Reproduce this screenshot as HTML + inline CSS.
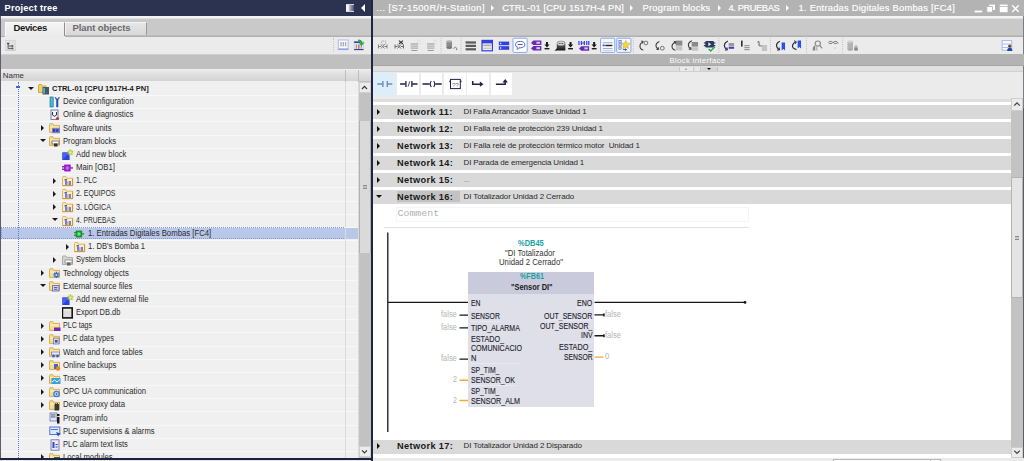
<!DOCTYPE html>
<html><head><meta charset="utf-8"><title>TIA Portal</title>
<style>
html,body{margin:0;padding:0}
body{width:1024px;height:461px;overflow:hidden;background:#fff;position:relative;font-family:"Liberation Sans",sans-serif;font-size:7.8px;color:#2a2a2a}
div{position:absolute;box-sizing:border-box}
svg{display:block}
.b{font-weight:bold}
/* left panel */
#lp{left:0;top:0;width:372px;height:461px;background:#f0f0f0;overflow:hidden}
#ltitle{left:0;top:0;width:371px;height:16.2px;background:#2b3351}
#ltitle .t{left:4.6px;top:2.9px;color:#fff;font-weight:bold;font-size:9.2px;letter-spacing:0.2px;line-height:11px;white-space:nowrap}
#ltabs{left:0;top:16.2px;width:371px;height:20px;background:linear-gradient(#f4f4f4 0,#f2f2f2 2px,#cdcdcd 3px,#c9c9c9 3.6px,#c9c9c9 100%)}
#ltool{left:0;top:36px;width:371px;height:18.4px;background:#ebebeb}
#lband{left:0;top:54.4px;width:371px;height:14.4px;background:#c0c0c0;border-top:1px solid #cfcfcf}
#lhead{left:0;top:68.8px;width:371px;height:12.6px;background:linear-gradient(#e9e9e9,#d3d3d3);border-top:1px solid #f0f0f0}
.tab1{left:5px;top:21.6px;width:59.5px;height:14.9px;background:linear-gradient(#f4f4f4,#ebebeb);border-left:1px solid #fafafa;border-top:1px solid #fafafa;border-right:1.6px solid #8c8c8c;}
.tab2{left:64.6px;top:22px;width:82px;height:13.9px;background:linear-gradient(#e6e6e6,#d8d8d8);border-left:1px solid #f4f4f4;border-top:1px solid #f4f4f4;border-right:1px solid #999;border-bottom:1px solid #a8a8a8}
.tabt{white-space:nowrap;font-weight:bold;font-size:9px;line-height:11px}
.tt{white-space:nowrap;line-height:13.2px;height:13.2px;color:#2c2c2c}
.tt.b{font-size:7.5px;color:#1c1c1c}
.ic{width:12px;height:12px}
.rs{left:1px;width:358px;height:1px;background:#f8f8f8}
.selbg{left:1px;width:357.5px;height:11.6px;background:#b9c7e8}
.sel{left:1px;width:344.6px;height:12px;border:1px dotted #7b94da}
.ar{width:0;height:0;border-left:3.6px solid #1a1a1a;border-top:3.1px solid transparent;border-bottom:3.1px solid transparent}
.ad{width:0;height:0;border-top:3.8px solid #1a1a1a;border-left:3.3px solid transparent;border-right:3.3px solid transparent}
/* right */
#div{left:370.7px;top:0;width:2px;height:461px;background:#1f2640}
#rtitle{left:372.7px;top:0;width:651.3px;height:16.2px;background:#b3b3b3}
#rtitle .t{left:3.5px;top:2.2px;color:#fff;font-size:9.6px;letter-spacing:0.32px;line-height:11px;white-space:nowrap;font-weight:bold;opacity:.96}
#rsub{left:372.7px;top:16.2px;width:651.3px;height:20.6px;background:linear-gradient(#f4f4f4 0,#f2f2f2 2px,#cdcdcd 3px,#c9c9c9 3.6px,#c9c9c9 18.6px,#bcbcbc 18.8px,#bcbcbc 19.8px,#b0b0b0 19.8px,#b0b0b0 100%)}
#rtool{left:372.7px;top:37px;width:651.3px;height:17.4px;background:#ebebeb}
#rband{z-index:2;left:372.7px;top:54.3px;width:651.3px;height:12.2px;background:#b3b3b3;border-bottom:0.8px solid #a6a6a6}
#rband .t{left:296px;top:1.2px;color:#fff;font-size:7.8px;line-height:10px;white-space:nowrap;letter-spacing:0.1px}
#rlad{left:372.7px;top:66.8px;width:651.3px;height:34.9px;background:#ebebeb;border-bottom:3.5px solid #dedede}
.lb{top:73px;width:21.8px;height:21.8px;background:#fff}
.nb{left:372.6px;width:638.6px;background:#d9d9d9}
.nt{left:397px;font-weight:bold;font-size:9.2px;letter-spacing:0.38px;line-height:13.4px;white-space:nowrap;color:#1a1a1a}
.nd{left:463.6px;font-size:7.8px;line-height:13.6px;white-space:nowrap;color:#2a2a2a}
.nar{left:376.9px;width:0;height:0;border-left:3.8px solid #111;border-top:3.4px solid transparent;border-bottom:3.4px solid transparent}
.nad{left:375.6px;width:0;height:0;border-top:3.6px solid #111;border-left:3.3px solid transparent;border-right:3.3px solid transparent}
.nhl{left:396.6px;width:63.8px;height:10.6px;background:#c2c2c2}
.pn0{white-space:nowrap;line-height:9px;font-size:7.6px;color:#1e1e2a;letter-spacing:-0.1px}
.pl{left:470.6px}
.pr{right:431.6px;text-align:right}
.val{white-space:nowrap;line-height:9px;font-size:7.8px;color:#b4b4b4}
.wl{height:1.1px;background:#1a1a1a}
.ol{height:1.2px;background:#f5a832}
</style></head><body>
<!-- LEFT PANEL -->
<div id="lp">
<div class="rs" style="top:95.08px"></div>
<div class="rs" style="top:108.26px"></div>
<div class="rs" style="top:121.44px"></div>
<div class="rs" style="top:134.62px"></div>
<div class="rs" style="top:147.80px"></div>
<div class="rs" style="top:160.98px"></div>
<div class="rs" style="top:174.16px"></div>
<div class="rs" style="top:187.34px"></div>
<div class="rs" style="top:200.52px"></div>
<div class="rs" style="top:213.70px"></div>
<div class="rs" style="top:226.88px"></div>
<div class="rs" style="top:240.06px"></div>
<div class="rs" style="top:253.24px"></div>
<div class="rs" style="top:266.42px"></div>
<div class="rs" style="top:279.60px"></div>
<div class="rs" style="top:292.78px"></div>
<div class="rs" style="top:305.96px"></div>
<div class="rs" style="top:319.14px"></div>
<div class="rs" style="top:332.32px"></div>
<div class="rs" style="top:345.50px"></div>
<div class="rs" style="top:358.68px"></div>
<div class="rs" style="top:371.86px"></div>
<div class="rs" style="top:385.04px"></div>
<div class="rs" style="top:398.22px"></div>
<div class="rs" style="top:411.40px"></div>
<div class="rs" style="top:424.58px"></div>
<div class="rs" style="top:437.76px"></div>
<div class="rs" style="top:450.94px"></div>
<div class="rs" style="top:464.12px"></div>
<div class="ad" style="left:27.6px;top:86.50px"></div>
<div class="ic" style="left:38px;top:82.70px"><svg width="12" height="12" viewBox="0 0 12 12"><path d="M0.5 2 L0.5 9.5 L8 9.5 L8 3 L4.5 3 L3.5 1.5 L1 1.5 Z" fill="#f3cf6a" stroke="#c79a2b" stroke-width="0.8"/><rect x="4.5" y="4" width="6.5" height="7.5" fill="#4a5568"/><rect x="5.3" y="5" width="1.6" height="5.5" fill="#3ec6e0"/></svg></div>
<div style="left:51.699999999999996px;top:82.0px;font-size:8.0px;font-weight:bold;color:#1c1c1c;line-height:13.2px;white-space:nowrap;transform-origin:0 0;transform:scaleX(0.9336);">CTRL-01 [CPU 1517H-4 PN]</div>
<div class="ic" style="left:49px;top:95.88px"><svg width="12" height="12" viewBox="0 0 12 12"><rect x="1" y="1" width="3.2" height="10" fill="#2fc4e6" stroke="#44506a" stroke-width="0.6"/><path d="M6 1.5 L7.5 4 L7.5 11 L9 11 L9 4 L10.5 1.5 L9.6 1.5 L8.8 3 L7.7 3 L6.9 1.5 Z" fill="#1f4fa8" stroke="#1f4fa8" stroke-width="0.5"/></svg></div>
<div style="left:63.4px;top:95.18px;font-size:8.3px;color:#2c2c2c;line-height:13.2px;white-space:nowrap;transform-origin:0 0;transform:scaleX(0.9414);">Device configuration</div>
<div class="ic" style="left:49px;top:109.06px"><svg width="12" height="12" viewBox="0 0 12 12"><rect x="2" y="1" width="7" height="9.5" fill="#f4f4fa" stroke="#5560a0" stroke-width="0.8"/><path d="M3.5 3 L3.5 6 Q5.5 8.5 7.5 6 L7.5 3" fill="none" stroke="#334" stroke-width="1"/><circle cx="8.5" cy="9.5" r="1.6" fill="#c33"/></svg></div>
<div style="left:63.4px;top:108.36px;font-size:8.3px;color:#2c2c2c;line-height:13.2px;white-space:nowrap;transform-origin:0 0;transform:scaleX(0.9304);">Online &amp; diagnostics</div>
<div class="ar" style="left:40.6px;top:124.94px"></div>
<div class="ic" style="left:49px;top:122.24px"><svg width="12" height="12" viewBox="0 0 12 12"><path d="M0.5 2.6 L0.5 10.4 L10.5 10.4 L10.5 3.4 L4.6 3.4 L3.8 1.7 L1 1.7 Z" fill="#f7dc8c" stroke="#d0a040" stroke-width="0.8"/><rect x="1" y="4.4" width="9" height="1.4" fill="#fbeebc"/><rect x="3" y="5.8" width="8" height="5.4" fill="#7a84c8"/><rect x="4" y="7.2" width="2.2" height="2.6" fill="#2a38a8"/><rect x="7.2" y="7.2" width="2.2" height="2.6" fill="#2a38a8"/></svg></div>
<div style="left:63.4px;top:121.54px;font-size:8.3px;color:#2c2c2c;line-height:13.2px;white-space:nowrap;transform-origin:0 0;transform:scaleX(0.9222);">Software units</div>
<div class="ad" style="left:39.6px;top:139.22px"></div>
<div class="ic" style="left:49px;top:135.42px"><svg width="12" height="12" viewBox="0 0 12 12"><path d="M0.5 2.6 L0.5 10.4 L10.5 10.4 L10.5 3.4 L4.6 3.4 L3.8 1.7 L1 1.7 Z" fill="#f7dc8c" stroke="#d0a040" stroke-width="0.8"/><rect x="1" y="4.4" width="9" height="1.4" fill="#fbeebc"/><rect x="3" y="6" width="7" height="3" fill="#fff" stroke="#555" stroke-width="0.7"/><rect x="5" y="8.5" width="3.5" height="3" fill="#333"/></svg></div>
<div style="left:63.4px;top:134.72px;font-size:8.3px;color:#2c2c2c;line-height:13.2px;white-space:nowrap;transform-origin:0 0;transform:scaleX(0.9226);">Program blocks</div>
<div class="ic" style="left:61.5px;top:148.60px"><svg width="12" height="12" viewBox="0 0 12 12"><path d="M0.3 3.4 L7.6 3.4 L7.6 11 L0.3 11 Z" fill="#2b44e0"/><path d="M0.3 3.4 L7.6 3.4 L0.3 11Z" fill="#4a62f0"/><circle cx="8.4" cy="3.4" r="2.9" fill="#b8e060" opacity="0.55"/><path d="M8.4 0.4 L9.1 2.5 L11.3 2.6 L9.6 3.9 L10.2 6 L8.4 4.8 L6.6 6 L7.2 3.9 L5.5 2.6 L7.7 2.5 Z" fill="#f8f060" stroke="#88a830" stroke-width="0.4"/></svg></div>
<div style="left:75.9px;top:147.9px;font-size:8.3px;color:#2c2c2c;line-height:13.2px;white-space:nowrap;transform-origin:0 0;transform:scaleX(0.9355);">Add new block</div>
<div class="ic" style="left:61.5px;top:161.78px"><svg width="12" height="12" viewBox="0 0 12 12"><rect x="2" y="2.6" width="6.8" height="6.8" rx="0.8" fill="#9a22cc"/><rect x="0" y="4.1" width="2.2" height="1.3" fill="#7a18a8"/><rect x="0" y="6.6" width="2.2" height="1.3" fill="#7a18a8"/><rect x="8.6" y="5.3" width="2.4" height="1.3" fill="#7a18a8"/><circle cx="5.4" cy="6" r="1.7" fill="#d060f8"/></svg></div>
<div style="left:75.9px;top:161.08px;font-size:8.3px;color:#2c2c2c;line-height:13.2px;white-space:nowrap;transform-origin:0 0;transform:scaleX(0.9394);">Main [OB1]</div>
<div class="ar" style="left:53.1px;top:177.66px"></div>
<div class="ic" style="left:61.5px;top:174.96px"><svg width="12" height="12" viewBox="0 0 12 12"><path d="M0.5 2.4 L0.5 10.6 L10.6 10.6 L10.6 3.2 L4.4 3.2 L3.6 1.5 L1 1.5 Z" fill="#fbeeb8" stroke="#d6a648" stroke-width="0.8"/><path d="M0.5 10.6 H10.6 V3.4" fill="none" stroke="#c48c30" stroke-width="0.8"/><g fill="#2b35e0"><rect x="2.6" y="4.2" width="2.4" height="1.3"/><rect x="3" y="5.4" width="0.7" height="4" opacity="0.55"/><rect x="3.4" y="6.4" width="2" height="1.2"/><rect x="3.4" y="8.4" width="2" height="1.2"/><rect x="6.8" y="6.4" width="2.2" height="1.2"/><rect x="6.8" y="8.4" width="2.2" height="1.2"/><rect x="5.4" y="6.8" width="1.4" height="0.5" opacity="0.5"/><rect x="5.4" y="8.8" width="1.4" height="0.5" opacity="0.5"/></g></svg></div>
<div style="left:75.9px;top:174.26px;font-size:8.3px;color:#2c2c2c;line-height:13.2px;white-space:nowrap;transform-origin:0 0;transform:scaleX(0.8276);">1. PLC</div>
<div class="ar" style="left:53.1px;top:190.84px"></div>
<div class="ic" style="left:61.5px;top:188.14px"><svg width="12" height="12" viewBox="0 0 12 12"><path d="M0.5 2.4 L0.5 10.6 L10.6 10.6 L10.6 3.2 L4.4 3.2 L3.6 1.5 L1 1.5 Z" fill="#fbeeb8" stroke="#d6a648" stroke-width="0.8"/><path d="M0.5 10.6 H10.6 V3.4" fill="none" stroke="#c48c30" stroke-width="0.8"/><g fill="#2b35e0"><rect x="2.6" y="4.2" width="2.4" height="1.3"/><rect x="3" y="5.4" width="0.7" height="4" opacity="0.55"/><rect x="3.4" y="6.4" width="2" height="1.2"/><rect x="3.4" y="8.4" width="2" height="1.2"/><rect x="6.8" y="6.4" width="2.2" height="1.2"/><rect x="6.8" y="8.4" width="2.2" height="1.2"/><rect x="5.4" y="6.8" width="1.4" height="0.5" opacity="0.5"/><rect x="5.4" y="8.8" width="1.4" height="0.5" opacity="0.5"/></g></svg></div>
<div style="left:75.9px;top:187.44px;font-size:8.3px;color:#2c2c2c;line-height:13.2px;white-space:nowrap;transform-origin:0 0;transform:scaleX(0.8396);">2. EQUIPOS</div>
<div class="ar" style="left:53.1px;top:204.02px"></div>
<div class="ic" style="left:61.5px;top:201.32px"><svg width="12" height="12" viewBox="0 0 12 12"><path d="M0.5 2.4 L0.5 10.6 L10.6 10.6 L10.6 3.2 L4.4 3.2 L3.6 1.5 L1 1.5 Z" fill="#fbeeb8" stroke="#d6a648" stroke-width="0.8"/><path d="M0.5 10.6 H10.6 V3.4" fill="none" stroke="#c48c30" stroke-width="0.8"/><g fill="#2b35e0"><rect x="2.6" y="4.2" width="2.4" height="1.3"/><rect x="3" y="5.4" width="0.7" height="4" opacity="0.55"/><rect x="3.4" y="6.4" width="2" height="1.2"/><rect x="3.4" y="8.4" width="2" height="1.2"/><rect x="6.8" y="6.4" width="2.2" height="1.2"/><rect x="6.8" y="8.4" width="2.2" height="1.2"/><rect x="5.4" y="6.8" width="1.4" height="0.5" opacity="0.5"/><rect x="5.4" y="8.8" width="1.4" height="0.5" opacity="0.5"/></g></svg></div>
<div style="left:75.9px;top:200.62px;font-size:8.3px;color:#2c2c2c;line-height:13.2px;white-space:nowrap;transform-origin:0 0;transform:scaleX(0.8622);">3. LÓGICA</div>
<div class="ad" style="left:52.1px;top:218.30px"></div>
<div class="ic" style="left:61.5px;top:214.50px"><svg width="12" height="12" viewBox="0 0 12 12"><path d="M0.5 2.4 L0.5 10.6 L10.6 10.6 L10.6 3.2 L4.4 3.2 L3.6 1.5 L1 1.5 Z" fill="#fbeeb8" stroke="#d6a648" stroke-width="0.8"/><path d="M0.5 10.6 H10.6 V3.4" fill="none" stroke="#c48c30" stroke-width="0.8"/><g fill="#2b35e0"><rect x="2.6" y="4.2" width="2.4" height="1.3"/><rect x="3" y="5.4" width="0.7" height="4" opacity="0.55"/><rect x="3.4" y="6.4" width="2" height="1.2"/><rect x="3.4" y="8.4" width="2" height="1.2"/><rect x="6.8" y="6.4" width="2.2" height="1.2"/><rect x="6.8" y="8.4" width="2.2" height="1.2"/><rect x="5.4" y="6.8" width="1.4" height="0.5" opacity="0.5"/><rect x="5.4" y="8.8" width="1.4" height="0.5" opacity="0.5"/></g></svg></div>
<div style="left:75.9px;top:213.8px;font-size:8.3px;color:#2c2c2c;line-height:13.2px;white-space:nowrap;transform-origin:0 0;transform:scaleX(0.8078);">4. PRUEBAS</div>
<div class="selbg" style="top:227.68px"></div><div class="sel" style="top:227.48px"></div>
<div class="ic" style="left:74px;top:227.68px"><svg width="12" height="12" viewBox="0 0 12 12"><rect x="1.6" y="2.4" width="6.6" height="7.2" rx="0.8" fill="#1f8f38"/><rect x="-0.2" y="4" width="2" height="1.3" fill="#1f8f38"/><rect x="-0.2" y="6.6" width="2" height="1.3" fill="#1f8f38"/><rect x="8" y="5.3" width="2.1" height="1.3" fill="#1f8f38"/><circle cx="4.9" cy="6" r="1.9" fill="#3fdc4c"/><circle cx="4.9" cy="6" r="0.9" fill="#7cf880"/></svg></div>
<div style="left:88.4px;top:226.98px;font-size:8.3px;color:#2c2c2c;line-height:13.2px;white-space:nowrap;transform-origin:0 0;transform:scaleX(0.9345);">1. Entradas Digitales Bombas [FC4]</div>
<div class="ar" style="left:65.6px;top:243.56px"></div>
<div class="ic" style="left:74px;top:240.86px"><svg width="12" height="12" viewBox="0 0 12 12"><path d="M0.5 2.4 L0.5 10.6 L10.6 10.6 L10.6 3.2 L4.4 3.2 L3.6 1.5 L1 1.5 Z" fill="#fbeeb8" stroke="#d6a648" stroke-width="0.8"/><path d="M0.5 10.6 H10.6 V3.4" fill="none" stroke="#c48c30" stroke-width="0.8"/><g fill="#2b35e0"><rect x="2.6" y="4.2" width="2.4" height="1.3"/><rect x="3" y="5.4" width="0.7" height="4" opacity="0.55"/><rect x="3.4" y="6.4" width="2" height="1.2"/><rect x="3.4" y="8.4" width="2" height="1.2"/><rect x="6.8" y="6.4" width="2.2" height="1.2"/><rect x="6.8" y="8.4" width="2.2" height="1.2"/><rect x="5.4" y="6.8" width="1.4" height="0.5" opacity="0.5"/><rect x="5.4" y="8.8" width="1.4" height="0.5" opacity="0.5"/></g></svg></div>
<div style="left:88.4px;top:240.16px;font-size:8.3px;color:#2c2c2c;line-height:13.2px;white-space:nowrap;transform-origin:0 0;transform:scaleX(0.9191);">1. DB's Bomba 1</div>
<div class="ar" style="left:53.1px;top:256.74px"></div>
<div class="ic" style="left:61.5px;top:254.04px"><svg width="12" height="12" viewBox="0 0 12 12"><path d="M0.5 3 L0.5 10.5 L10.5 10.5 L10.5 3.5 L5 3.5 L4 2 L1 2 Z" fill="#d6d6d6" stroke="#a0a0a0" stroke-width="0.8"/><rect x="3" y="6" width="7" height="3" fill="#fff" stroke="#777" stroke-width="0.7"/><rect x="5" y="8.5" width="3.5" height="3" fill="#666"/></svg></div>
<div style="left:75.9px;top:253.34px;font-size:8.3px;color:#2c2c2c;line-height:13.2px;white-space:nowrap;transform-origin:0 0;transform:scaleX(0.9214);">System blocks</div>
<div class="ar" style="left:40.6px;top:269.92px"></div>
<div class="ic" style="left:49px;top:267.22px"><svg width="12" height="12" viewBox="0 0 12 12"><path d="M0.5 2.6 L0.5 10.4 L10.5 10.4 L10.5 3.4 L4.6 3.4 L3.8 1.7 L1 1.7 Z" fill="#f7dc8c" stroke="#d0a040" stroke-width="0.8"/><rect x="1" y="4.4" width="9" height="1.4" fill="#fbeebc"/><g stroke="#2a6ae0" stroke-width="1.3"><path d="M7.4 4.8 V11 M4.3 7.9 H10.5 M5.2 5.7 L9.6 10.1 M9.6 5.7 L5.2 10.1"/></g><circle cx="7.4" cy="7.9" r="1" fill="#bfe0ff"/></svg></div>
<div style="left:63.4px;top:266.52px;font-size:8.3px;color:#2c2c2c;line-height:13.2px;white-space:nowrap;transform-origin:0 0;transform:scaleX(0.9321);">Technology objects</div>
<div class="ad" style="left:39.6px;top:284.20px"></div>
<div class="ic" style="left:49px;top:280.40px"><svg width="12" height="12" viewBox="0 0 12 12"><path d="M0.5 2.6 L0.5 10.4 L10.5 10.4 L10.5 3.4 L4.6 3.4 L3.8 1.7 L1 1.7 Z" fill="#f7dc8c" stroke="#d0a040" stroke-width="0.8"/><rect x="1" y="4.4" width="9" height="1.4" fill="#fbeebc"/><rect x="3.4" y="5.6" width="6.6" height="5.4" fill="#d0d4ee" stroke="#5a64a4" stroke-width="0.8"/><rect x="5" y="7.2" width="3.4" height="0.8" fill="#3a4490"/><rect x="5" y="8.8" width="3.4" height="0.8" fill="#3a4490"/></svg></div>
<div style="left:63.4px;top:279.7px;font-size:8.3px;color:#2c2c2c;line-height:13.2px;white-space:nowrap;transform-origin:0 0;transform:scaleX(0.9286);">External source files</div>
<div class="ic" style="left:61.5px;top:293.58px"><svg width="12" height="12" viewBox="0 0 12 12"><path d="M0.3 3.4 L7.6 3.4 L7.6 11 L0.3 11 Z" fill="#2b44e0"/><path d="M0.3 3.4 L7.6 3.4 L0.3 11Z" fill="#4a62f0"/><circle cx="8.4" cy="3.4" r="2.9" fill="#b8e060" opacity="0.55"/><path d="M8.4 0.4 L9.1 2.5 L11.3 2.6 L9.6 3.9 L10.2 6 L8.4 4.8 L6.6 6 L7.2 3.9 L5.5 2.6 L7.7 2.5 Z" fill="#f8f060" stroke="#88a830" stroke-width="0.4"/></svg></div>
<div style="left:75.9px;top:292.88px;font-size:8.3px;color:#2c2c2c;line-height:13.2px;white-space:nowrap;transform-origin:0 0;transform:scaleX(0.9409);">Add new external file</div>
<div class="ic" style="left:61.5px;top:306.76px"><svg width="12" height="12" viewBox="0 0 12 12"><rect x="0.4" y="0.9" width="9.8" height="10" fill="#dedede" stroke="#141414" stroke-width="1.6"/><rect x="2" y="2.4" width="6.4" height="1" fill="#f4f4f4"/></svg></div>
<div style="left:75.9px;top:306.06px;font-size:8.3px;color:#2c2c2c;line-height:13.2px;white-space:nowrap;transform-origin:0 0;transform:scaleX(0.8974);">Export DB.db</div>
<div class="ar" style="left:40.6px;top:322.64px"></div>
<div class="ic" style="left:49px;top:319.94px"><svg width="12" height="12" viewBox="0 0 12 12"><path d="M0.5 2.6 L0.5 10.4 L10.5 10.4 L10.5 3.4 L4.6 3.4 L3.8 1.7 L1 1.7 Z" fill="#f7dc8c" stroke="#d0a040" stroke-width="0.8"/><rect x="1" y="4.4" width="9" height="1.4" fill="#fbeebc"/><rect x="5" y="7.5" width="6.5" height="3.5" fill="#6a2ac0"/></svg></div>
<div style="left:63.4px;top:319.24px;font-size:8.3px;color:#2c2c2c;line-height:13.2px;white-space:nowrap;transform-origin:0 0;transform:scaleX(0.8524);">PLC tags</div>
<div class="ar" style="left:40.6px;top:335.82px"></div>
<div class="ic" style="left:49px;top:333.12px"><svg width="12" height="12" viewBox="0 0 12 12"><path d="M0.5 2.6 L0.5 10.4 L10.5 10.4 L10.5 3.4 L4.6 3.4 L3.8 1.7 L1 1.7 Z" fill="#f7dc8c" stroke="#d0a040" stroke-width="0.8"/><rect x="1" y="4.4" width="9" height="1.4" fill="#fbeebc"/><rect x="4.5" y="5" width="5.5" height="6" fill="#cfd4ee" stroke="#55609a" stroke-width="0.6"/><rect x="6" y="7" width="2.5" height="2.5" fill="#3a4aa8"/></svg></div>
<div style="left:63.4px;top:332.42px;font-size:8.3px;color:#2c2c2c;line-height:13.2px;white-space:nowrap;transform-origin:0 0;transform:scaleX(0.8969);">PLC data types</div>
<div class="ar" style="left:40.6px;top:349.00px"></div>
<div class="ic" style="left:49px;top:346.30px"><svg width="12" height="12" viewBox="0 0 12 12"><path d="M0.5 2.6 L0.5 10.4 L10.5 10.4 L10.5 3.4 L4.6 3.4 L3.8 1.7 L1 1.7 Z" fill="#f7dc8c" stroke="#d0a040" stroke-width="0.8"/><rect x="1" y="4.4" width="9" height="1.4" fill="#fbeebc"/><rect x="2.5" y="6" width="8" height="3" fill="#e8ecff" stroke="#5560a0" stroke-width="0.6"/><circle cx="4.5" cy="10" r="1.5" fill="#4466cc"/><circle cx="8.5" cy="10" r="1.5" fill="#4466cc"/></svg></div>
<div style="left:63.4px;top:345.6px;font-size:8.3px;color:#2c2c2c;line-height:13.2px;white-space:nowrap;transform-origin:0 0;transform:scaleX(0.9435);">Watch and force tables</div>
<div class="ar" style="left:40.6px;top:362.18px"></div>
<div class="ic" style="left:49px;top:359.48px"><svg width="12" height="12" viewBox="0 0 12 12"><path d="M0.5 2.6 L0.5 10.4 L10.5 10.4 L10.5 3.4 L4.6 3.4 L3.8 1.7 L1 1.7 Z" fill="#f7dc8c" stroke="#d0a040" stroke-width="0.8"/><rect x="1" y="4.4" width="9" height="1.4" fill="#fbeebc"/><rect x="5" y="5" width="4" height="5" fill="#3a66d8"/><circle cx="9" cy="9.5" r="2.2" fill="#f08020"/></svg></div>
<div style="left:63.4px;top:358.78px;font-size:8.3px;color:#2c2c2c;line-height:13.2px;white-space:nowrap;transform-origin:0 0;transform:scaleX(0.9333);">Online backups</div>
<div class="ar" style="left:40.6px;top:375.36px"></div>
<div class="ic" style="left:49px;top:372.66px"><svg width="12" height="12" viewBox="0 0 12 12"><path d="M0.5 2.6 L0.5 10.4 L10.5 10.4 L10.5 3.4 L4.6 3.4 L3.8 1.7 L1 1.7 Z" fill="#f7dc8c" stroke="#d0a040" stroke-width="0.8"/><rect x="1" y="4.4" width="9" height="1.4" fill="#fbeebc"/><rect x="2.5" y="5" width="9" height="6" fill="#3aa0d8"/><path d="M3 9 L5.5 7 L8 9 L11 6.5" stroke="#fff" stroke-width="0.9" fill="none"/></svg></div>
<div style="left:63.4px;top:371.96px;font-size:8.3px;color:#2c2c2c;line-height:13.2px;white-space:nowrap;transform-origin:0 0;transform:scaleX(0.9019);">Traces</div>
<div class="ar" style="left:40.6px;top:388.54px"></div>
<div class="ic" style="left:49px;top:385.84px"><svg width="12" height="12" viewBox="0 0 12 12"><path d="M0.5 2.6 L0.5 10.4 L10.5 10.4 L10.5 3.4 L4.6 3.4 L3.8 1.7 L1 1.7 Z" fill="#f7dc8c" stroke="#d0a040" stroke-width="0.8"/><rect x="1" y="4.4" width="9" height="1.4" fill="#fbeebc"/><circle cx="7.5" cy="8" r="3.3" fill="#3a78e0"/><circle cx="7.5" cy="8" r="1.6" fill="none" stroke="#fff" stroke-width="0.8"/></svg></div>
<div style="left:63.4px;top:385.14px;font-size:8.3px;color:#2c2c2c;line-height:13.2px;white-space:nowrap;transform-origin:0 0;transform:scaleX(0.9275);">OPC UA communication</div>
<div class="ar" style="left:40.6px;top:401.72px"></div>
<div class="ic" style="left:49px;top:399.02px"><svg width="12" height="12" viewBox="0 0 12 12"><path d="M0.5 2.6 L0.5 10.4 L10.5 10.4 L10.5 3.4 L4.6 3.4 L3.8 1.7 L1 1.7 Z" fill="#f7dc8c" stroke="#d0a040" stroke-width="0.8"/><rect x="1" y="4.4" width="9" height="1.4" fill="#fbeebc"/><rect x="5.5" y="5" width="4.5" height="6.5" fill="#3a3a3a"/><rect x="6.3" y="4" width="1" height="2" fill="#3a3a3a"/><rect x="8" y="4" width="1" height="2" fill="#3a3a3a"/></svg></div>
<div style="left:63.4px;top:398.32px;font-size:8.3px;color:#2c2c2c;line-height:13.2px;white-space:nowrap;transform-origin:0 0;transform:scaleX(0.9333);">Device proxy data</div>
<div class="ic" style="left:49px;top:412.20px"><svg width="12" height="12" viewBox="0 0 12 12"><rect x="1" y="1" width="7" height="8" fill="#dfe6fa" stroke="#5a68a8" stroke-width="0.7"/><rect x="2" y="2.5" width="4.5" height="0.9" fill="#445"/><rect x="2" y="4.5" width="4.5" height="0.9" fill="#445"/><rect x="8" y="5" width="2.5" height="6.5" fill="#1a1a1a"/><rect x="8" y="2" width="2.5" height="2" fill="#1a1a1a"/></svg></div>
<div style="left:63.4px;top:411.5px;font-size:8.3px;color:#2c2c2c;line-height:13.2px;white-space:nowrap;transform-origin:0 0;transform:scaleX(0.9365);">Program info</div>
<div class="ic" style="left:49px;top:425.38px"><svg width="12" height="12" viewBox="0 0 12 12"><rect x="0.8" y="2" width="10" height="7.5" fill="#dfe8ff" stroke="#4a78d8" stroke-width="1"/><rect x="2" y="4" width="7" height="1" fill="#4a78d8"/><path d="M7 7 L11.5 8.5 L9 11.5 Z" fill="#2a4ac8"/></svg></div>
<div style="left:63.4px;top:424.68px;font-size:8.3px;color:#2c2c2c;line-height:13.2px;white-space:nowrap;transform-origin:0 0;transform:scaleX(0.9193);">PLC supervisions &amp; alarms</div>
<div class="ic" style="left:49px;top:438.56px"><svg width="12" height="12" viewBox="0 0 12 12"><rect x="2" y="0.8" width="8" height="10.4" fill="#e8ecfa" stroke="#5a68a8" stroke-width="0.8"/><rect x="3.5" y="3" width="2" height="6" fill="#3a4ab0"/><rect x="6.5" y="5" width="2.2" height="1" fill="#3a4ab0"/><rect x="6.5" y="7.5" width="2.2" height="1" fill="#3a4ab0"/></svg></div>
<div style="left:63.4px;top:437.86px;font-size:8.3px;color:#2c2c2c;line-height:13.2px;white-space:nowrap;transform-origin:0 0;transform:scaleX(0.9064);">PLC alarm text lists</div>
<div class="ar" style="left:40.6px;top:454.44px"></div>
<div class="ic" style="left:49px;top:451.74px"><svg width="12" height="12" viewBox="0 0 12 12"><path d="M0.5 2.6 L0.5 10.4 L10.5 10.4 L10.5 3.4 L4.6 3.4 L3.8 1.7 L1 1.7 Z" fill="#f7dc8c" stroke="#d0a040" stroke-width="0.8"/><rect x="1" y="4.4" width="9" height="1.4" fill="#fbeebc"/><rect x="5" y="5" width="6" height="6.5" fill="#4a5568"/></svg></div>
<div style="left:63.4px;top:451.04px;font-size:8.3px;color:#2c2c2c;line-height:13.2px;white-space:nowrap;transform-origin:0 0;transform:scaleX(0.9249);">Local modules</div>
  <div style="left:344.5px;top:81px;width:1px;height:377px;background:#dcdcdc"></div>
  <div style="left:358px;top:81px;width:1px;height:377px;background:#dcdcdc"></div>
  <!-- scrollbar -->
  <div style="left:359px;top:81.4px;width:12px;height:377px;background:#c2c2c2"></div>
  <div style="left:359px;top:121px;width:11.8px;height:132px;background:#dadada;border-left:1px solid #b0b0b0;border-right:1px solid #b0b0b0"></div>
  <div style="left:362.8px;top:185px;width:4.4px;height:4px;background:repeating-linear-gradient(#8e8e8e 0,#8e8e8e 0.9px,#bcbcbc 0.9px,#bcbcbc 1.55px)"></div>
  <div style="left:359.4px;top:82px;width:11.3px;height:11.2px;background:#ececec;border:1px solid #d0d0d0"><svg width="9" height="9" viewBox="0 0 9 9" style="position:absolute;left:0;top:0"><path d="M2 6 L4.5 3.4 L7 6" fill="none" stroke="#333" stroke-width="1.1"/></svg></div>
  <div style="left:359.4px;top:446.2px;width:11.3px;height:11.2px;background:#ececec;border:1px solid #d0d0d0"><svg width="9" height="9" viewBox="0 0 9 9" style="position:absolute;left:0;top:0"><path d="M2 3.4 L4.5 6 L7 3.4" fill="none" stroke="#333" stroke-width="1.1"/></svg></div>
  <!-- dotted tree line -->
  <div style="left:17.7px;top:82px;width:0;height:376px;border-left:1px dotted #5b7bd8"></div>
  <div style="left:16.4px;top:85.9px;width:3.6px;height:2.6px;background:#3b63d6"></div>
  <div id="ltitle"><div class="t">Project tree</div>
    <div style="left:345.9px;top:3.9px;width:8px;height:7.9px;background:linear-gradient(90deg,#f2f2f2 0,#f2f2f2 26%,#b4b8c6 34%,#4a5270 100%);border-top:0.8px solid #d4d6de;border-bottom:0.8px solid #d4d6de;border-left:0.8px solid #f4f4f4"></div>
    <div style="left:361px;top:4px;width:0;height:0;border-right:4.4px solid #fff;border-top:4px solid transparent;border-bottom:4px solid transparent"></div>
  </div>
  <div id="ltabs"></div>
  <div class="tab1"></div><div style="left:13.6px;top:22.1px;font-size:9.5px;font-weight:bold;letter-spacing:-0.386px;color:#1a1a1a;line-height:11px;white-space:nowrap;">Devices</div>
  <div class="tab2"></div><div style="left:72.5px;top:22.1px;font-size:9.5px;font-weight:bold;letter-spacing:-0.086px;color:#6a6a6a;line-height:11px;white-space:nowrap;">Plant objects</div>
    <div id="ltool">
    <div style="left:332.8px;top:2px;width:0;height:14px;border-left:1px dotted #c8c8c8"></div>
  </div>
<svg style="position:absolute;left:0;top:36px" width="371" height="18.4" viewBox="0 36 371 18.4"><g><rect x="5.6" y="40.6" width="9.8" height="9.6" fill="#e2e2e2" stroke="#cfcfcf" stroke-width="0.6"/><rect x="5.6" y="49.6" width="9.8" height="1" fill="#c4c4c4"/><path d="M8 43.6 V48.6 M8 46 H12.6 M8 48.4 H12.6" stroke="#555" stroke-width="0.9" fill="none"/><rect x="7" y="42.8" width="2.2" height="1.4" fill="#444"/><rect x="11.4" y="45.2" width="1.8" height="1.6" fill="#555"/><rect x="11.4" y="47.6" width="1.8" height="1.6" fill="#555"/><path d="M12 42.4 L14.6 40 M13 43.8 L15.4 43 M11 41 L11.4 39.6" stroke="#d8d8d8" stroke-width="0.6"/></g><g><rect x="338.4" y="40" width="9.8" height="9.6" fill="#fbfbff" stroke="#b0b6f0" stroke-width="1"/><rect x="338.4" y="48.4" width="9.8" height="1.4" fill="#8e98e6"/><rect x="340.4" y="42" width="1.3" height="4.4" fill="#a4a4b4"/><rect x="342.7" y="42" width="1.3" height="4.4" fill="#a4a4b4"/><rect x="345" y="42" width="1.3" height="4.4" fill="#a4a4b4"/></g><g><rect x="354.2" y="41.4" width="9.4" height="8.6" fill="#dfe4fa" stroke="#b8c0ea" stroke-width="0.5"/><rect x="354.2" y="41.4" width="6" height="1.6" fill="#2a4a8c"/><rect x="354.2" y="49" width="9.4" height="1.1" fill="#2a4a8c"/><rect x="356" y="44.4" width="1.1" height="4.4" fill="#d88a3a"/><rect x="358.4" y="44.4" width="1.1" height="4.4" fill="#8a4aa8"/><rect x="360.8" y="44.4" width="1.1" height="4.4" fill="#d88a3a"/><path d="M358.2 39.6 Q362 39.4 362.4 42.6 L364.8 42.6 L361.4 46 L358.8 42.6 L360.6 42.6 Q360.4 41 358.2 41Z" fill="#2aa83a"/></g></svg>
  <div style="left:64.6px;top:35px;width:306.4px;height:1px;background:#bcbcbc"></div><div style="left:64.6px;top:36px;width:306.4px;height:1px;background:#b0b0b0"></div>
  <div style="left:0;top:36px;width:5px;height:1px;background:#b0b0b0"></div>
  <div id="lband"></div>
  <div id="lhead"><div style="left:2.8px;top:0.1px;font-size:7.9px;line-height:11px;color:#333">Name</div>
    <div style="left:344.5px;top:0;width:1px;height:12px;background:#bdbdbd"></div>
    <div style="left:358px;top:0;width:1px;height:12px;background:#bdbdbd"></div>
  </div>
  <div style="left:0;top:16px;width:1px;height:445px;background:#5a5f70"></div>
  <div style="left:0;top:457.6px;width:371px;height:2px;background:#1d2440"></div>
  <div style="left:0;top:459.6px;width:371px;height:2px;background:#e8e8e8"></div>
</div>
<div id="div"></div>
<!-- RIGHT PANEL -->
<div id="rtitle"></div>
<div style="left:376.5px;top:3.1px;font-size:9.3px;letter-spacing:0.403px;color:#fff;line-height:11px;white-space:nowrap;-webkit-text-stroke:0.18px #fff;">... [S7-1500R/H-Station]</div>
<div style="left:502.2px;top:3.1px;font-size:9.3px;letter-spacing:0.123px;color:#fff;line-height:11px;white-space:nowrap;-webkit-text-stroke:0.18px #fff;">CTRL-01 [CPU 1517H-4 PN]</div>
<div style="left:642.6px;top:3.1px;font-size:9.3px;letter-spacing:0.230px;color:#fff;line-height:11px;white-space:nowrap;-webkit-text-stroke:0.18px #fff;">Program blocks</div>
<div style="left:728.5px;top:3.1px;font-size:9.3px;letter-spacing:-0.399px;color:#fff;line-height:11px;white-space:nowrap;-webkit-text-stroke:0.18px #fff;">4. PRUEBAS</div>
<div style="left:798.6px;top:3.1px;font-size:9.3px;letter-spacing:0.253px;color:#fff;line-height:11px;white-space:nowrap;-webkit-text-stroke:0.18px #fff;">1. Entradas Digitales Bombas [FC4]</div>
<div style="left:490.8px;top:5.3px;width:0;height:0;border-left:3.8px solid #fff;border-top:3.1px solid transparent;border-bottom:3.1px solid transparent"></div>
<div style="left:630.2px;top:5.3px;width:0;height:0;border-left:3.8px solid #fff;border-top:3.1px solid transparent;border-bottom:3.1px solid transparent"></div>
<div style="left:717.6px;top:5.3px;width:0;height:0;border-left:3.8px solid #fff;border-top:3.1px solid transparent;border-bottom:3.1px solid transparent"></div>
<div style="left:786.0px;top:5.3px;width:0;height:0;border-left:3.8px solid #fff;border-top:3.1px solid transparent;border-bottom:3.1px solid transparent"></div>
<svg style="position:absolute;left:970px;top:0" width="54" height="16" viewBox="970 0 54 16"><rect x="974.6" y="10.6" width="7.6" height="1.8" fill="#fff"/><rect x="989.2" y="4.6" width="5.8" height="5.4" fill="#fff"/><rect x="986.8" y="6.6" width="5.8" height="5.6" fill="#fff" stroke="#b3b3b3" stroke-width="0.8"/><rect x="999.8" y="4.6" width="7.8" height="7.6" fill="#fff"/><rect x="999.8" y="6.2" width="7.8" height="0.8" fill="#b3b3b3"/><path d="M1012.2 5.2 L1018.8 12 M1018.8 5.2 L1012.2 12" stroke="#fff" stroke-width="1.4"/></svg>
<div id="rsub"></div>
<div id="rtool"></div>
<svg style="position:absolute;left:372.7px;top:36px" width="651.3" height="18.4" viewBox="372.7 36 651.3 18.4"><g stroke="#7f7f7f" stroke-width="1" fill="none"><path d="M378 44.5 V48.5 M378 46.5 H380.5 M380.5 44.5 L384 48.5 M384 44.5 L380.5 48.5 M384 46.5 H386.5 M386.5 44.5 V48.5"/><rect x="381.2" y="41" width="4" height="3.4" stroke-dasharray="0.8 0.8" stroke-width="0.7"/></g><g stroke="#666" stroke-width="1" fill="none"><path d="M394.6 44.5 V48.5 M394.6 46.5 H397 M397 44.5 L400.5 48.5 M400.5 44.5 L397 48.5 M400.5 46.5 H403 M403 44.5 V48.5"/><path d="M398.5 40.6 L402.5 44 M402.5 40.6 L398.5 44" stroke="#333" stroke-width="1.1"/></g><g><rect x="410.3" y="43" width="7.4" height="6" fill="#bdbdbd"/><rect x="410.3" y="44.8" width="7.4" height="0.7" fill="#d8d8d8"/><rect x="410.3" y="46.8" width="7.4" height="0.7" fill="#d8d8d8"/><rect x="410.90000000000003" y="50" width="6.2" height="1" fill="#9c9c9c"/></g><g stroke="#d4d4d4" stroke-width="0.6"><path d="M416.7 42.6 L420.3 39.8 M418.3 44 L420.90000000000003 43 M416.8 41 L417.6 39.4"/></g><g><rect x="426.6" y="43" width="7.4" height="6" fill="#bdbdbd"/><rect x="426.6" y="44.8" width="7.4" height="0.7" fill="#d8d8d8"/><rect x="426.6" y="46.8" width="7.4" height="0.7" fill="#d8d8d8"/><rect x="427.20000000000005" y="50" width="6.2" height="1" fill="#9c9c9c"/></g><g stroke="#d4d4d4" stroke-width="0.6"><path d="M433.0 42.6 L436.6 39.8 M434.6 44 L437.20000000000005 43 M433.1 41 L433.90000000000003 39.4"/></g><line x1="440.6" y1="38" x2="440.6" y2="53" stroke="#c0c0c0" stroke-width="0.9" stroke-dasharray="1 1"/><g><rect x="446" y="41.2" width="5.6" height="6.6" fill="#8a8a8a"/><ellipse cx="448.8" cy="41.4" rx="2.8" ry="1.2" fill="#b0b0b0"/><ellipse cx="448.8" cy="47.8" rx="2.8" ry="1.2" fill="#777"/><path d="M453 48.5 Q455.5 46 456.5 48.5 L456 50.2" fill="none" stroke="#777" stroke-width="1"/></g><line x1="460.6" y1="38" x2="460.6" y2="53" stroke="#c0c0c0" stroke-width="0.9" stroke-dasharray="1 1"/><g fill="#5a5a5a"><rect x="465.2" y="41.4" width="10.4" height="2.2"/><rect x="465.2" y="44.8" width="10.4" height="2.2"/><rect x="465.2" y="48.2" width="10.4" height="2.2"/><rect x="465.2" y="41.4" width="3.6" height="1" fill="#777"/></g><g><rect x="481.6" y="40.4" width="10.4" height="10.4" fill="#f4f4f4" stroke="#3140e0" stroke-width="1.2"/><rect x="481.6" y="40.4" width="10.4" height="3" fill="#3140e0"/><rect x="482.8" y="44.6" width="8" height="1.6" fill="#a8a8a8"/><rect x="482.8" y="47.6" width="8" height="1.6" fill="#c8c8c8"/></g><g fill="#3140e0"><rect x="498.4" y="41.6" width="10.4" height="3.6"/><rect x="498.4" y="46.2" width="10.4" height="3.6"/></g><g fill="#dfe4ff"><path d="M499.6 42.4 L501.4 43.4 L499.6 44.4Z"/><path d="M499.6 47 L501.4 48 L499.6 49Z"/></g><rect x="512.6" y="38.2" width="14.2" height="14.2" rx="1" fill="#fff" stroke="#86a8ea" stroke-width="1"/><g><ellipse cx="519.8" cy="44.6" rx="4.6" ry="3.2" fill="#fff" stroke="#5668d8" stroke-width="1"/><path d="M517 47 L516.6 49.6 L519.4 47.6" fill="#fff" stroke="#5668d8" stroke-width="0.8"/><rect x="517.4" y="44" width="4.8" height="1" fill="#555"/></g><g fill="#6a27b8"><path d="M530.6 43 L533 40.6 H541 V45 H533Z"/><path d="M530.6 48.4 L533 46 H541 V50.6 H533Z"/></g><rect x="536" y="41.8" width="3.6" height="2" fill="#d8c8f0"/><rect x="536" y="47.2" width="3.6" height="2" fill="#d8c8f0"/><g fill="#1a1a1a"><rect x="545.6" y="42" width="2" height="3"/><path d="M544 44.6 H549.2 L546.6 47.4Z"/><rect x="544.2" y="48" width="4.8" height="1.4"/></g><defs><linearGradient id="bg11" x1="0" y1="0" x2="0" y2="1"><stop offset="0" stop-color="#9a9a9a"/><stop offset="0.45" stop-color="#555"/><stop offset="1" stop-color="#111"/></linearGradient></defs><g><path d="M556.4 43.6 Q556.4 40.8 560 40.8 H561.6 Q565 40.8 565 43.6 V50.6 H557.4 L554.2 50.8 L556.4 48.2Z" fill="url(#bg11)"/><ellipse cx="560.6" cy="43.4" rx="3.6" ry="2" fill="#d4d4d4"/><rect x="558.4" y="43" width="1" height="0.9" fill="#333"/><rect x="560.1" y="43" width="1" height="0.9" fill="#333"/><rect x="561.8" y="43" width="1" height="0.9" fill="#333"/></g><g fill="#1a1a1a"><rect x="569.2" y="42" width="2" height="3"/><path d="M567.6 44.6 H572.8000000000001 L570.2 47.4Z"/><rect x="567.8000000000001" y="48" width="4.8" height="1.4"/></g><g stroke="#3140e0" stroke-width="1.2" fill="none"><path d="M578.6 41 V45 M581 41 V45 M581 43 H584 M584 41 V45 M586.4 41 V45 M588.4 41 V45"/></g><path d="M578.6 48.4 L581 46.2 H588.8 V50.8 H581Z" fill="#6a27b8"/><rect x="584" y="47.4" width="3.4" height="2" fill="#d8c8f0"/><g fill="#1a1a1a"><rect x="592.8000000000001" y="42" width="2" height="3"/><path d="M591.2 44.6 H596.4000000000001 L593.8000000000001 47.4Z"/><rect x="591.4000000000001" y="48" width="4.8" height="1.4"/></g><rect x="600.2" y="38.2" width="14.2" height="14.2" rx="1" fill="#f4f8ff" stroke="#86a8ea" stroke-width="1"/><g><rect x="602.4" y="42.4" width="9.8" height="0.8" fill="#999"/><rect x="602.4" y="44.6" width="2" height="1.6" fill="#3a48c8"/><rect x="605" y="44.8" width="7" height="1.4" fill="#222"/><rect x="602.4" y="48" width="9.8" height="0.8" fill="#999"/><rect x="602.4" y="50" width="9.8" height="0.8" fill="#b8c0ee"/></g><rect x="616.4" y="38.2" width="14.2" height="14.2" rx="1" fill="#f4f8ff" stroke="#86a8ea" stroke-width="1"/><g fill="none" stroke="#4a66d8" stroke-width="0.7"><rect x="618.6" y="40.6" width="2.2" height="2.2"/><rect x="618.6" y="43.8" width="2.2" height="2.2"/><rect x="618.6" y="47" width="2.2" height="2.2"/></g><path d="M625.4 40.4 L626.8 43.2 L629.8 43.6 L627.6 45.6 L628.2 48.6 L625.4 47.2 L622.6 48.6 L623.2 45.6 L621 43.6 L624 43.2Z" fill="#f2d648" stroke="#c8a020" stroke-width="0.5"/><path d="M622.6 49.6 H626 M624.6 48.6 L626.2 49.6 L624.6 50.6" stroke="#334" stroke-width="0.8" fill="none"/><line x1="633" y1="38" x2="633" y2="53" stroke="#c0c0c0" stroke-width="0.9" stroke-dasharray="1 1"/><g fill="none" stroke="#3a3a3a" stroke-width="1.1"><path d="M642.6 41.6 Q638.6 44 640 48 Q641 50 643 50"/><path d="M640.8 41 L643 41.4 L642 43.6" stroke-width="0.9"/><circle cx="645.6" cy="43" r="1.9" stroke="#666" stroke-width="0.9"/></g><g fill="none" stroke="#3a3a3a" stroke-width="1.1"><path d="M659 41.4 Q654.6 43.4 656 47 Q656.6 48.4 658 49"/><path d="M656 49.4 L658.4 49.6 L658 47.2" stroke-width="0.9"/><circle cx="662" cy="48.2" r="1.9" stroke="#666" stroke-width="0.9"/></g><g><rect x="675.4" y="40.6" width="6.6" height="5" fill="#8a8a8a"/><rect x="675.4" y="46.2" width="6.6" height="4.2" fill="#c4c4c4"/><path d="M675.4 42 Q670.6 44 672 48 Q673 50 675 50.2" fill="none" stroke="#3a3a3a" stroke-width="1.1"/><path d="M673.4 41.4 L675.8 41.8 L674.6 44" fill="none" stroke="#3a3a3a" stroke-width="0.9"/></g><g><rect x="691.4" y="42" width="6.4" height="4.6" fill="#8a8a8a"/><rect x="691.4" y="47.2" width="6.4" height="3.6" fill="#c4c4c4"/><path d="M691.6 40.8 Q687 43 688.4 46.6 Q689 48 690.4 48.8" fill="none" stroke="#3a3a3a" stroke-width="1.1"/><path d="M688.4 49.2 L690.8 49.4 L690.4 47" fill="none" stroke="#3a3a3a" stroke-width="0.9"/></g><g><rect x="705" y="41" width="8.6" height="6.4" rx="1" fill="#2c3a5c"/><rect x="703.6" y="42.4" width="11.4" height="1.2" fill="#2c3a5c"/><rect x="703.6" y="45" width="11.4" height="1.2" fill="#2c3a5c"/><path d="M708 42.2 L711 44.2 L708 46.2Z" fill="#dfe6ff"/><path d="M708.4 49 L710.4 51 L714.6 46.8" fill="none" stroke="#2aa84a" stroke-width="1.5"/></g><line x1="718.6" y1="38" x2="718.6" y2="53" stroke="#c0c0c0" stroke-width="0.9" stroke-dasharray="1 1"/><g><path d="M727.6 41 Q723 43.4 724.4 47 Q725 48.6 726.6 49.4" fill="none" stroke="#2b2f45" stroke-width="1.2"/><path d="M724.6 50 L727.2 50 L726.6 47.4" fill="none" stroke="#2b2f45" stroke-width="1"/><rect x="728.4" y="43" width="5.4" height="3.6" fill="#9a9a9a"/><rect x="728.4" y="47" width="5.4" height="1.8" fill="#3140e0"/></g><g><rect x="740.8" y="40.6" width="1.5" height="6" fill="#222"/><rect x="744" y="45" width="5.4" height="1.2" fill="#999"/><rect x="744" y="47" width="5.4" height="1.2" fill="#999"/><rect x="744" y="49" width="5.4" height="1.2" fill="#999"/></g><g><path d="M757.6 41 L759.4 43.4 M759 41 L757.4 43" stroke="#666" stroke-width="0.8"/><rect x="758.2" y="43" width="1.2" height="3" fill="#777"/><rect x="759" y="45.4" width="3" height="1" fill="#777"/><rect x="761.6" y="45.4" width="5.2" height="1.2" fill="#aaa"/><rect x="761.6" y="47.4" width="5.2" height="1.2" fill="#aaa"/><rect x="761.6" y="49.4" width="5.2" height="1.2" fill="#aaa"/></g><line x1="770.2" y1="38" x2="770.2" y2="53" stroke="#c0c0c0" stroke-width="0.9" stroke-dasharray="1 1"/><g><path d="M779.6 41.2 Q775.2 43.4 776.6 47 Q777.2 48.6 778.8 49.4" fill="none" stroke="#2b2f45" stroke-width="1.2"/><path d="M776.8 50 L779.4 50 L778.8 47.4" fill="none" stroke="#2b2f45" stroke-width="1"/><path d="M781.4 42.4 H784.8 V50.6 L783.1 49 L781.4 50.6Z" fill="#2a50e8"/></g><g><path d="M796.2 49.6 Q791.4 48.6 792.4 45 Q793.2 42.6 795.4 42" fill="none" stroke="#2b2f45" stroke-width="1.2"/><path d="M793.8 40.8 L796.2 41.8 L794.8 44" fill="none" stroke="#2b2f45" stroke-width="1"/><path d="M797.4 40.6 H800.8 V48.6 L799.1 47 L797.4 48.6Z" fill="#2a50e8"/></g><line x1="806.2" y1="38" x2="806.2" y2="53" stroke="#c0c0c0" stroke-width="0.9" stroke-dasharray="1 1"/><g><circle cx="817.6" cy="43.6" r="2.6" fill="none" stroke="#8a8a8a" stroke-width="1.1"/><path d="M819.6 45.6 L822 48.4" stroke="#8a8a8a" stroke-width="1.2"/><path d="M812.4 50.6 Q812.4 45.6 815 45.6 V50.6Z" fill="#888"/><path d="M815.6 50.6 V46.4 Q817.4 46.4 817.6 50.6Z" fill="#bbb"/></g><g fill="none" stroke="#777" stroke-width="0.9"><rect x="828.6" y="41.4" width="3.4" height="2.2" rx="1"/><rect x="833.6" y="41.4" width="3.4" height="2.2" rx="1"/><path d="M832 42.4 H833.6 M837 42.4 L838.4 43.4"/></g><path d="M834.4 47 L836 48 L834.4 49Z" fill="#bbb"/><line x1="842.4" y1="38" x2="842.4" y2="53" stroke="#c0c0c0" stroke-width="0.9" stroke-dasharray="1 1"/><g><rect x="847.2" y="41.6" width="5.6" height="8" fill="#b4b4b4"/><ellipse cx="850" cy="41.8" rx="2.8" ry="1.2" fill="#cfcfcf"/><ellipse cx="850" cy="49.6" rx="2.8" ry="1.2" fill="#a8a8a8"/><rect x="854" y="47.4" width="3.6" height="3.2" fill="#8a8a8a"/><path d="M854.8 47.4 V46.2 Q855.8 45 856.8 46.2 V47.4" fill="none" stroke="#8a8a8a" stroke-width="0.7"/></g><g><rect x="1002" y="40.6" width="9.6" height="9.6" fill="#fbfbff" stroke="#a8b0ea" stroke-width="0.9"/><rect x="1002" y="43.6" width="9.6" height="0.9" fill="#a8b0ea"/><rect x="1002" y="47" width="6" height="0.9" fill="#a8b0ea"/><circle cx="1009.6" cy="46.2" r="1.6" fill="#6a4a3a"/><path d="M1007 51 Q1007 47.8 1009.6 47.8 Q1012.2 47.8 1012.2 51Z" fill="#1c4a9c"/></g></svg>
<div id="rband"></div>
<div style="left:669.4px;top:55.9px;font-size:7.9px;letter-spacing:0.285px;color:#fafafa;line-height:10px;white-space:nowrap;z-index:3;">Block interface</div>
<div id="rlad"></div>
<div style="left:372.7px;top:65px;width:651.3px;height:6.7px;background:#e0e0e0;border-bottom:1px solid #d0d0d0"></div>
<div style="left:678.8px;top:66.8px;width:14.8px;height:4.2px;background:#ebebeb;border-left:1px solid #c8c8c8;border-right:1px solid #c8c8c8"></div>
<div style="left:694.8px;top:66.8px;width:6.2px;height:4.2px;background:#e8e8e8;border-right:1px solid #c8c8c8"></div>
<div style="left:701.8px;top:66.8px;width:15.9px;height:4.2px;background:#d6d6d6;border-right:1px solid #c0c0c0"></div>
<div style="left:685px;top:67.6px;width:0;height:0;border-bottom:2.4px solid #8a8a8a;border-left:1.8px solid transparent;border-right:1.8px solid transparent"></div>
<div style="left:707.4px;top:67.8px;width:0;height:0;border-top:2.8px solid #111;border-left:2.2px solid transparent;border-right:2.2px solid transparent"></div>
<div class="lb" style="left:373.4px;background:#dceef9"></div>
<div class="lb" style="left:397.2px"></div>
<div class="lb" style="left:420.7px"></div>
<div class="lb" style="left:443.8px"></div>
<div class="lb" style="left:467.2px"></div>
<div class="lb" style="left:490.7px"></div>
<svg style="position:absolute;left:372.7px;top:72px" width="160" height="24" viewBox="372.7 72 160 24"><g stroke="#748bb9" stroke-width="1.4" fill="none"><path d="M377 84 H382.4 M382.6 81 V87 M387 81 V87 M387.2 84 H392"/></g><g stroke="#1f2149" stroke-width="1.5" fill="none"><path d="M399.8 84 H405.2 M411.8 84 H417.2"/><path d="M405.6 81 V87 M411.6 81 V87" stroke-width="1.3"/><path d="M409.5 81.4 L407.7 86.6" stroke-width="0.8"/></g><g stroke="#1f2149" stroke-width="1.5" fill="none"><path d="M422.2 84 H429.4 M435 84 H441.4"/><path d="M431 81 Q428.8 84 431 87 M433.4 81 Q435.6 84 433.4 87" stroke-width="1.1"/></g><g><rect x="450.2" y="79.4" width="9.8" height="9.2" fill="#fff" stroke="#1f2149" stroke-width="1"/><rect x="449" y="80.6" width="1.4" height="1.6" fill="#1f2149"/><rect x="459.8" y="80.6" width="1.4" height="1.6" fill="#1f2149"/><text x="455.1" y="87.2" font-family="Liberation Sans" font-size="5.8" text-anchor="middle" fill="#666">??</text></g><g stroke="#1f2149" stroke-width="1.5" fill="none"><path d="M472.4 81 V84.2 H481"/></g><path d="M479.6 81.6 L483.2 84.2 L479.6 86.8Z" fill="#1f2149"/><g stroke="#1f2149" stroke-width="1.5" fill="none"><path d="M495.6 84.2 H504.9 V81.6"/></g><path d="M502.2 82.4 L504.9 79 L507.6 82.4Z" fill="#1f2149"/></svg>
<div class="nb" style="top:105.2px;height:13.7px"></div>
<div class="nar" style="top:108.7px"></div>
<div class="nt" style="top:106.1px">Network 11:</div>
<div style="left:463.6px;top:105.0px;font-size:8.0px;letter-spacing:-0.154px;color:#2a2a2a;line-height:13.6px;white-space:nowrap;">DI Falla Arrancador Suave Unidad 1</div>
<div class="nb" style="top:122.2px;height:13.7px"></div>
<div class="nar" style="top:125.7px"></div>
<div class="nt" style="top:123.1px">Network 12:</div>
<div style="left:463.6px;top:122.0px;font-size:8.0px;letter-spacing:-0.097px;color:#2a2a2a;line-height:13.6px;white-space:nowrap;">DI Falla relé de protección 239 Unidad 1</div>
<div class="nb" style="top:139.2px;height:13.7px"></div>
<div class="nar" style="top:142.7px"></div>
<div class="nt" style="top:140.1px">Network 13:</div>
<div style="left:463.6px;top:139.0px;font-size:8.0px;letter-spacing:-0.091px;color:#2a2a2a;line-height:13.6px;white-space:nowrap;">DI Falla relé de protección térmico motor  Unidad 1</div>
<div class="nb" style="top:156.2px;height:13.7px"></div>
<div class="nar" style="top:159.7px"></div>
<div class="nt" style="top:157.1px">Network 14:</div>
<div style="left:463.6px;top:156.0px;font-size:8.0px;letter-spacing:-0.152px;color:#2a2a2a;line-height:13.6px;white-space:nowrap;">DI Parada de emergencia Unidad 1</div>
<div class="nb" style="top:173.2px;height:13.7px"></div>
<div class="nar" style="top:176.7px"></div>
<div class="nt" style="top:174.1px">Network 15:</div>
<div style="left:463.6px;top:173.0px;font-size:8.0px;letter-spacing:-0.997px;color:#999;line-height:13.6px;white-space:nowrap;">....</div>
<div class="nb" style="top:190.2px;height:14px"></div>
<div class="nhl" style="top:191.4px"></div>
<div class="nad" style="top:195.0px"></div>
<div class="nt" style="top:191.1px">Network 16:</div>
<div style="left:463.6px;top:190.0px;font-size:8.0px;letter-spacing:-0.115px;color:#2a2a2a;line-height:13.6px;white-space:nowrap;">DI Totalizador Unidad 2 Cerrado</div>
<div class="nb" style="top:439.6px;height:14.2px"></div>
<div class="nar" style="top:443.1px"></div>
<div class="nt" style="top:439.9px">Network 17:</div>
<div style="left:463.6px;top:439.4px;font-size:8.0px;letter-spacing:-0.103px;color:#2a2a2a;line-height:13.6px;white-space:nowrap;">DI Totalizador Unidad 2 Disparado</div>
<!-- comment -->
<div style="left:395.8px;top:207px;width:353px;height:14.6px;border:1px solid #f5f5f9"></div>
<div style="left:397.6px;top:208px;font-family:'Liberation Mono',monospace;font-size:9.9px;line-height:12px;color:#b2b2b2;white-space:nowrap">Comment</div>
<div style="left:383.6px;top:227px;width:365px;height:1px;background:#dcdcf2"></div>
<!-- LAD -->
<div style="left:467.9px;top:292px;width:126.6px;height:114.8px;background:#dedfe9"></div>
<div style="left:467.9px;top:271.7px;width:126.6px;height:22.8px;background:#c9cadb"></div>
<div style="left:470.6px;top:298.9px;font-size:8.2px;color:#1e1e2a;line-height:9px;white-space:nowrap;transform-origin:0 0;transform:scaleX(0.8252);-webkit-text-stroke:0.12px #1e1e2a;">EN</div>
<div style="left:470.6px;top:311.7px;font-size:8.2px;color:#1e1e2a;line-height:9px;white-space:nowrap;transform-origin:0 0;transform:scaleX(0.8345);-webkit-text-stroke:0.12px #1e1e2a;">SENSOR</div>
<div style="left:470.6px;top:324.3px;font-size:8.2px;color:#1e1e2a;line-height:9px;white-space:nowrap;transform-origin:0 0;transform:scaleX(0.8517);-webkit-text-stroke:0.12px #1e1e2a;">TIPO_ALARMA</div>
<div style="left:470.6px;top:334.9px;font-size:8.2px;color:#1e1e2a;line-height:9px;white-space:nowrap;transform-origin:0 0;transform:scaleX(0.8760);-webkit-text-stroke:0.12px #1e1e2a;">ESTADO_</div>
<div style="left:470.6px;top:344.1px;font-size:8.2px;color:#1e1e2a;line-height:9px;white-space:nowrap;transform-origin:0 0;transform:scaleX(0.8612);-webkit-text-stroke:0.12px #1e1e2a;">COMUNICACIO</div>
<div style="left:470.6px;top:353.8px;font-size:8.2px;color:#1e1e2a;line-height:9px;white-space:nowrap;transform-origin:0 0;transform:scaleX(0.9119);-webkit-text-stroke:0.12px #1e1e2a;">N</div>
<div style="left:470.6px;top:366.4px;font-size:8.2px;color:#1e1e2a;line-height:9px;white-space:nowrap;transform-origin:0 0;transform:scaleX(0.8309);-webkit-text-stroke:0.12px #1e1e2a;">SP_TIM_</div>
<div style="left:470.6px;top:375.6px;font-size:8.2px;color:#1e1e2a;line-height:9px;white-space:nowrap;transform-origin:0 0;transform:scaleX(0.8621);-webkit-text-stroke:0.12px #1e1e2a;">SENSOR_OK</div>
<div style="left:470.6px;top:386.9px;font-size:8.2px;color:#1e1e2a;line-height:9px;white-space:nowrap;transform-origin:0 0;transform:scaleX(0.8309);-webkit-text-stroke:0.12px #1e1e2a;">SP_TIM_</div>
<div style="left:470.6px;top:396.6px;font-size:8.2px;color:#1e1e2a;line-height:9px;white-space:nowrap;transform-origin:0 0;transform:scaleX(0.8760);-webkit-text-stroke:0.12px #1e1e2a;">SENSOR_ALM</div>
<div style="left:576.7px;top:298.9px;font-size:8.2px;color:#1e1e2a;line-height:9px;white-space:nowrap;transform-origin:0 0;transform:scaleX(0.8610);-webkit-text-stroke:0.12px #1e1e2a;">ENO</div>
<div style="left:544.3px;top:311.7px;font-size:8.2px;color:#1e1e2a;line-height:9px;white-space:nowrap;transform-origin:0 0;transform:scaleX(0.8549);-webkit-text-stroke:0.12px #1e1e2a;">OUT_SENSOR</div>
<div style="left:540px;top:322.2px;font-size:8.2px;color:#1e1e2a;line-height:9px;white-space:nowrap;transform-origin:0 0;transform:scaleX(0.8598);-webkit-text-stroke:0.12px #1e1e2a;">OUT_SENSOR_</div>
<div style="left:580.8px;top:331.2px;font-size:8.2px;color:#1e1e2a;line-height:9px;white-space:nowrap;transform-origin:0 0;transform:scaleX(0.8413);-webkit-text-stroke:0.12px #1e1e2a;">INV</div>
<div style="left:559.2px;top:343.3px;font-size:8.2px;color:#1e1e2a;line-height:9px;white-space:nowrap;transform-origin:0 0;transform:scaleX(0.8866);-webkit-text-stroke:0.12px #1e1e2a;">ESTADO_</div>
<div style="left:563.9px;top:352.5px;font-size:8.2px;color:#1e1e2a;line-height:9px;white-space:nowrap;transform-origin:0 0;transform:scaleX(0.8287);-webkit-text-stroke:0.12px #1e1e2a;">SENSOR</div>
<div style="left:518.3px;top:238.5px;font-size:8.2px;font-weight:bold;color:#1aa3a3;line-height:9px;white-space:nowrap;transform-origin:0 0;transform:scaleX(0.9131);">%DB45</div>
<div style="left:505.3px;top:248.9px;font-size:8.2px;color:#333;line-height:9px;white-space:nowrap;transform-origin:0 0;transform:scaleX(0.9433);">"DI Totalizador</div>
<div style="left:498.9px;top:258.0px;font-size:8.2px;color:#333;line-height:9px;white-space:nowrap;transform-origin:0 0;transform:scaleX(0.9477);">Unidad 2 Cerrado"</div>
<div style="left:519.5px;top:271.8px;font-size:8.2px;font-weight:bold;color:#1aa3a3;line-height:9px;white-space:nowrap;transform-origin:0 0;transform:scaleX(0.8741);">%FB61</div>
<div style="left:511px;top:283.1px;font-size:8.2px;font-weight:bold;color:#1a1a1a;line-height:9px;white-space:nowrap;transform-origin:0 0;transform:scaleX(0.9033);">"Sensor DI"</div>
<div style="left:441.4px;top:310.2px;font-size:8.399999999999999px;color:#b4b4b4;line-height:9px;white-space:nowrap;transform-origin:0 0;transform:scaleX(0.8905);">false</div>
<div style="left:441.4px;top:323.0px;font-size:8.399999999999999px;color:#b4b4b4;line-height:9px;white-space:nowrap;transform-origin:0 0;transform:scaleX(0.8905);">false</div>
<div style="left:441.4px;top:354.1px;font-size:8.399999999999999px;color:#b4b4b4;line-height:9px;white-space:nowrap;transform-origin:0 0;transform:scaleX(0.8905);">false</div>
<div style="left:453px;top:375.0px;font-size:8.399999999999999px;color:#b4b4b4;line-height:9px;white-space:nowrap;transform-origin:0 0;transform:scaleX(0.8562);">2</div>
<div style="left:453px;top:396.2px;font-size:8.399999999999999px;color:#b4b4b4;line-height:9px;white-space:nowrap;transform-origin:0 0;transform:scaleX(0.8562);">2</div>
<div style="left:605.4px;top:310.2px;font-size:8.399999999999999px;color:#b4b4b4;line-height:9px;white-space:nowrap;transform-origin:0 0;transform:scaleX(0.9017);">false</div>
<div style="left:605.4px;top:331.2px;font-size:8.399999999999999px;color:#b4b4b4;line-height:9px;white-space:nowrap;transform-origin:0 0;transform:scaleX(0.9017);">false</div>
<div style="left:605.4px;top:352.1px;font-size:8.399999999999999px;color:#b4b4b4;line-height:9px;white-space:nowrap;transform-origin:0 0;transform:scaleX(0.8990);">0</div>
<!-- pin lines -->
<svg style="position:absolute;left:380px;top:228px" width="380" height="210" viewBox="380 228 380 210">
<g stroke="#161616" stroke-width="1.3" fill="none">
<path d="M387.8 232.6 V432"/>
<path d="M388 302.4 H468"/>
<path d="M594.5 302.4 H745"/>
<path d="M459.5 315.1 H468 M459.5 327.8 H468 M459.5 359.1 H468"/>
<path d="M594.5 314.9 H604 M594.5 335.75 H604"/>
</g>
<g stroke="#f6aa30" stroke-width="1.4" fill="none">
<path d="M459.5 380.2 H468 M459.5 400.5 H468 M594.5 357.1 H603.4"/>
</g>
<g fill="#161616"><rect x="603.2" y="313.4" width="1.5" height="3"/><rect x="603.2" y="334.25" width="1.5" height="3"/><circle cx="745" cy="302.4" r="1.4"/></g>
<g stroke="#eeeef6" stroke-width="0.8"><path d="M470.6 308.2 H480 M470.6 321.4 H500 M470.6 363.8 H521 M470.6 385.4 H515 M576 308.2 H592.6 M545 320 H592.6 M560 342.3 H592.6"/></g>
</svg>
<!-- right scrollbar -->
<div style="left:1011.2px;top:98.2px;width:12px;height:359.6px;background:#c3c3c3"></div>
<div style="left:1011.2px;top:176.9px;width:12px;height:121.5px;background:#e4e4e4;border:1px solid #b4b4b4"></div>
<div style="left:1015.2px;top:235.6px;width:4.2px;height:4px;background:repeating-linear-gradient(#8a8a8a 0,#8a8a8a 0.9px,#c8c8c8 0.9px,#c8c8c8 1.6px)"></div>
<div style="left:1011.2px;top:98.2px;width:12px;height:12.4px;background:#ececec;border:1px solid #cecece"><svg width="10" height="10" viewBox="0 0 10 10" style="position:absolute;left:0;top:0"><path d="M2.2 6.6 L5 3.8 L7.8 6.6" fill="none" stroke="#444" stroke-width="1.3"/></svg></div>
<div style="left:1011.2px;top:446.6px;width:12px;height:11.2px;background:#ececec;border:1px solid #cecece"><svg width="10" height="10" viewBox="0 0 10 10" style="position:absolute;left:0;top:-0.6px"><path d="M2.2 3.6 L5 6.4 L7.8 3.6" fill="none" stroke="#444" stroke-width="1.3"/></svg></div>
<div style="left:1023.1px;top:16px;width:1px;height:445px;background:#7a7d88"></div>
<div style="left:1023.1px;top:108px;width:1px;height:353px;background:#5a5d68"></div>
<!-- bottom -->
<div style="left:372.6px;top:457.8px;width:651.4px;height:4px;background:#ebebeb"></div>
<div style="left:833px;top:459px;width:107.5px;height:4px;background:#fdfdfd;border:1px solid #b8b8b8"></div>
<div style="left:929.6px;top:459px;width:1px;height:4px;background:#b8b8b8"></div>
</body></html>
